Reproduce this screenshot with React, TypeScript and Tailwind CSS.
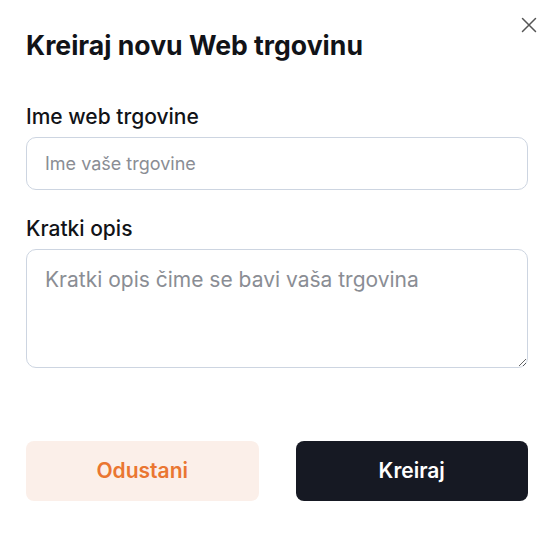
import React from "react";

export default function App() {
  return (
    <div className="relative w-[552px] h-[543px] bg-white" style={{ fontFamily: "Inter, 'Noto Sans', sans-serif" }}>
      <button className="absolute right-[15px] top-[17px] w-[16px] h-[16px] flex items-center justify-center text-[#555]">
        <svg width="16" height="16" viewBox="0 0 16 16" fill="none" stroke="currentColor" strokeWidth="1.5" strokeLinecap="round">
          <path d="M1.5 1.5L14.5 14.5M14.5 1.5L1.5 14.5" />
        </svg>
      </button>
      <div className="flex flex-col pl-[26px] pr-[24px] pt-[29px]">
        <h1 className="text-[26.6px] leading-[32px] font-bold text-[#111318]">Kreiraj novu Web trgovinu</h1>
        <label className="mt-[43px] text-[21px] leading-[26px] font-medium text-[#111318]">Ime web trgovine</label>
        <input
          className="mt-[7px] h-[53px] w-full rounded-[10px] border border-[#cdd5e1] px-[18px] text-[18px] text-[#111318] placeholder:text-[#8a8d94] outline-none"
          placeholder="Ime vaše trgovine"
        />
        <label className="mt-[26px] text-[21px] leading-[26px] font-medium text-[#111318]">Kratki opis</label>
        <textarea
          className="mt-[7px] h-[119px] w-full rounded-[10px] border border-[#cdd5e1] px-[18px] pt-[16px] text-[21px] leading-[28px] text-[#111318] placeholder:text-[#8a8d94] outline-none"
          placeholder="Kratki opis čime se bavi vaša trgovina"
        />
        <div className="mt-[73px] flex gap-[37px]">
          <button className="flex-1 h-[60px] rounded-[8px] bg-[#fbefe9] text-[#ea7631] text-[21px] font-semibold">Odustani</button>
          <button className="flex-1 h-[60px] rounded-[8px] bg-[#161923] text-white text-[21px] font-semibold">Kreiraj</button>
        </div>
      </div>
    </div>
  );
}
